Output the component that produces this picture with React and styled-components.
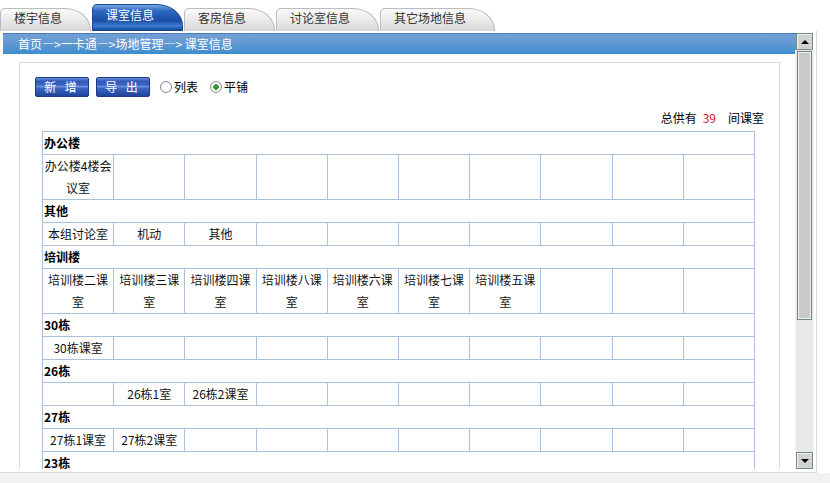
import styled, { createGlobalStyle } from 'styled-components'

const GlobalStyle = createGlobalStyle`
  html, body {
    margin: 0;
    padding: 0;
    background: #fff;
  }
  body {
    font-family: "Noto Sans CJK SC", "Liberation Sans", sans-serif;
    font-size: 12px;
    color: #000;
  }
`

const Page = styled.div`
  width: 830px;
  height: 483px;
  display: flex;
  flex-direction: column;
  overflow: hidden;
`
const TabBar = styled.div`
  display: flex;
  align-items: flex-end;
  height: 31px;
  flex-shrink: 0;
`
const Tab = styled.div`
  box-sizing: border-box;
  height: ${(p) => (p.active ? '27px' : '23px')};
  padding: ${(p) => (p.active ? '1px' : '0')} 28px 0 13px;
  margin-right: 1px;
  line-height: 17px;
  white-space: nowrap;
  border: 1px solid ${(p) => (p.active ? '#1d4790' : '#bcbcbc')};
  border-bottom: none;
  border-radius: 5px 26px 0 0 / 5px 22px 0 0;
  color: ${(p) => (p.active ? '#fff' : '#333')};
  background: ${(p) =>
    p.active
      ? 'linear-gradient(to bottom, #7aa6e2 0%, #2f68c2 22%, #1b4fa6 60%, #3b7cd2 80%, #2a66bb 88%, #0e3a86 100%)'
      : 'linear-gradient(to bottom, #fafafa 0%, #ececec 45%, #d8d8d8 100%)'};
`
const Frame = styled.div`
  box-sizing: border-box;
  width: 817px;
  height: 442px;
  flex-shrink: 0;
  display: flex;
  padding: 2px 3px 3px 3px;
  border-right: 1px solid #d8d8d8;
  border-bottom: 1px solid #d8d8d8;
`
const Viewport = styled.div`
  flex: 1;
  overflow: hidden;
  display: flex;
  flex-direction: column;
`
const Crumb = styled.div`
  box-sizing: border-box;
  height: 21px;
  flex-shrink: 0;
  padding-left: 15px;
  line-height: 19px;
  color: #fff;
  border-top: 1px solid #4a7bb6;
  background: linear-gradient(to bottom, #72a0d6 0%, #6198d2 50%, #3b8dcf 100%);
`
const Dash = styled.span`
  font-feature-settings: "fwid";
`
const Panel = styled.div`
  flex-shrink: 0;
  margin: 8px 16px 0 16px;
  padding: 14px 15px 20px 15px;
  border: 1px solid #d6dde6;
  background: #fff;
`
const Toolbar = styled.div`
  display: flex;
  align-items: center;
  height: 20px;
`
const ActionButton = styled.button`
  box-sizing: border-box;
  width: 54px;
  height: 20px;
  margin: 0 7px 0 0;
  padding: 0;
  font-family: inherit;
  font-size: 12px;
  line-height: 18px;
  letter-spacing: 3px;
  color: #fff;
  border: 1px solid #1c3a85;
  border-radius: 2px;
  background: linear-gradient(
    to bottom,
    #6a8fdc 0%,
    #3159b6 18%,
    #3d66c3 40%,
    #7096e2 48%,
    #3d66c3 56%,
    #2b52ad 82%,
    #1f4399 100%
  );
  cursor: pointer;
`
const RadioLabel = styled.label`
  display: flex;
  align-items: center;
  margin-left: ${(p) => p.offset || 0}px;
  line-height: 20px;
  cursor: pointer;
`
const RadioDot = styled.span`
  box-sizing: border-box;
  width: 12px;
  height: 12px;
  margin-right: 2px;
  border-radius: 50%;
  border: 1px solid #8b8f93;
  background: radial-gradient(circle at 50% 50%, ${(p) => (p.checked ? '#3fae3a 0, #2c8a2c 2.5px, #fff 3px' : '#fff 0')}, #fff 55%, #dcdcdc 100%);
`
const CountLine = styled.div`
  margin-top: 11px;
  height: 20px;
  line-height: 20px;
  text-align: right;
`
const Num = styled.span`
  color: #c81818;
  margin: 0 12px 0 6px;
`
const Grid = styled.table`
  width: 713px;
  margin: 3px 0 0 7px;
  table-layout: fixed;
  border-collapse: collapse;
`
const Cell = styled.td`
  border: 1px solid #aac1d9;
  padding: 0 1px;
  height: 22px;
  line-height: 22px;
  text-align: center;
  vertical-align: middle;
  word-break: break-all;
  color: #111;
`
const GroupCell = styled(Cell)`
  padding: 0 0 0 1px;
  text-align: left;
  font-weight: bold;
  color: #000;
`
const ScrollBar = styled.div`
  width: 17px;
  flex-shrink: 0;
  display: flex;
  flex-direction: column;
  background: #e8e8e8;
`
const ScrollButton = styled.div`
  box-sizing: border-box;
  height: 17px;
  flex-shrink: 0;
  display: flex;
  align-items: center;
  justify-content: center;
  border: 1px solid #768888;
  background: #d2d2d2;
  box-shadow: inset 1px 1px 0 #f2f2f2;
`
const Arrow = styled.span`
  width: 0;
  height: 0;
  border-left: 4px solid transparent;
  border-right: 4px solid transparent;
  ${(p) => (p.down ? 'border-top: 4px solid #000;' : 'border-bottom: 4px solid #000;')}
`
const Track = styled.div`
  flex: 1;
  padding-top: 1px;
  border-left: 1px solid #f4f4f4;
  border-right: 1px solid #f4f4f4;
  margin: 0 -1px;
`
const Thumb = styled.div`
  box-sizing: border-box;
  height: 269px;
  margin: 0 1px;
  border: 1px solid #718484;
  background: #c9c9c9;
  box-shadow: inset 0 0 0 1px #eef1f1;
`
const Footer = styled.div`
  flex: 1;
  background: #f2f2f2;
`

const tabs = ['楼宇信息', '课室信息', '客房信息', '讨论室信息', '其它场地信息']

const groups = [
  { name: '办公楼', rooms: ['办公楼4楼会议室'] },
  { name: '其他', rooms: ['本组讨论室', '机动', '其他'] },
  {
    name: '培训楼',
    rooms: ['培训楼二课室', '培训楼三课室', '培训楼四课室', '培训楼八课室', '培训楼六课室', '培训楼七课室', '培训楼五课室'],
  },
  { name: '30栋', rooms: ['30栋课室'] },
  { name: '26栋', rooms: ['', '26栋1室', '26栋2课室'] },
  { name: '27栋', rooms: ['27栋1课室', '27栋2课室'] },
  { name: '23栋', rooms: [] },
]

function pad(rooms) {
  const out = [...rooms]
  while (out.length % 10 !== 0 || out.length === 0) out.push('')
  return out
}

export default function App() {
  return (
    <Page>
      <GlobalStyle />
      <TabBar>
        {tabs.map((t) => (
          <Tab key={t} active={t === '课室信息'}>
            {t}
          </Tab>
        ))}
      </TabBar>
      <Frame>
        <Viewport>
          <Crumb>
            首页<Dash>—</Dash>&gt;一卡通<Dash>—</Dash>&gt;场地管理<Dash>—</Dash>&gt; 课室信息
          </Crumb>
          <Panel>
            <Toolbar>
              <ActionButton>新 增</ActionButton>
              <ActionButton>导 出</ActionButton>
              <RadioLabel offset={3}>
                <RadioDot />
                列表
              </RadioLabel>
              <RadioLabel offset={12}>
                <RadioDot checked />
                平铺
              </RadioLabel>
            </Toolbar>
            <CountLine>
              总供有<Num>39</Num>间课室
            </CountLine>
            <Grid>
              <tbody>
                {groups.map((g) => [
                  <tr key={g.name + '-h'}>
                    <GroupCell colSpan={10}>{g.name}</GroupCell>
                  </tr>,
                  <tr key={g.name + '-r'}>
                    {pad(g.rooms).map((r, i) => (
                      <Cell key={i}>{r || '\u00a0'}</Cell>
                    ))}
                  </tr>,
                ])}
              </tbody>
            </Grid>
          </Panel>
        </Viewport>
        <ScrollBar>
          <ScrollButton>
            <Arrow />
          </ScrollButton>
          <Track>
            <Thumb />
          </Track>
          <ScrollButton>
            <Arrow down />
          </ScrollButton>
        </ScrollBar>
      </Frame>
      <Footer />
    </Page>
  )
}
